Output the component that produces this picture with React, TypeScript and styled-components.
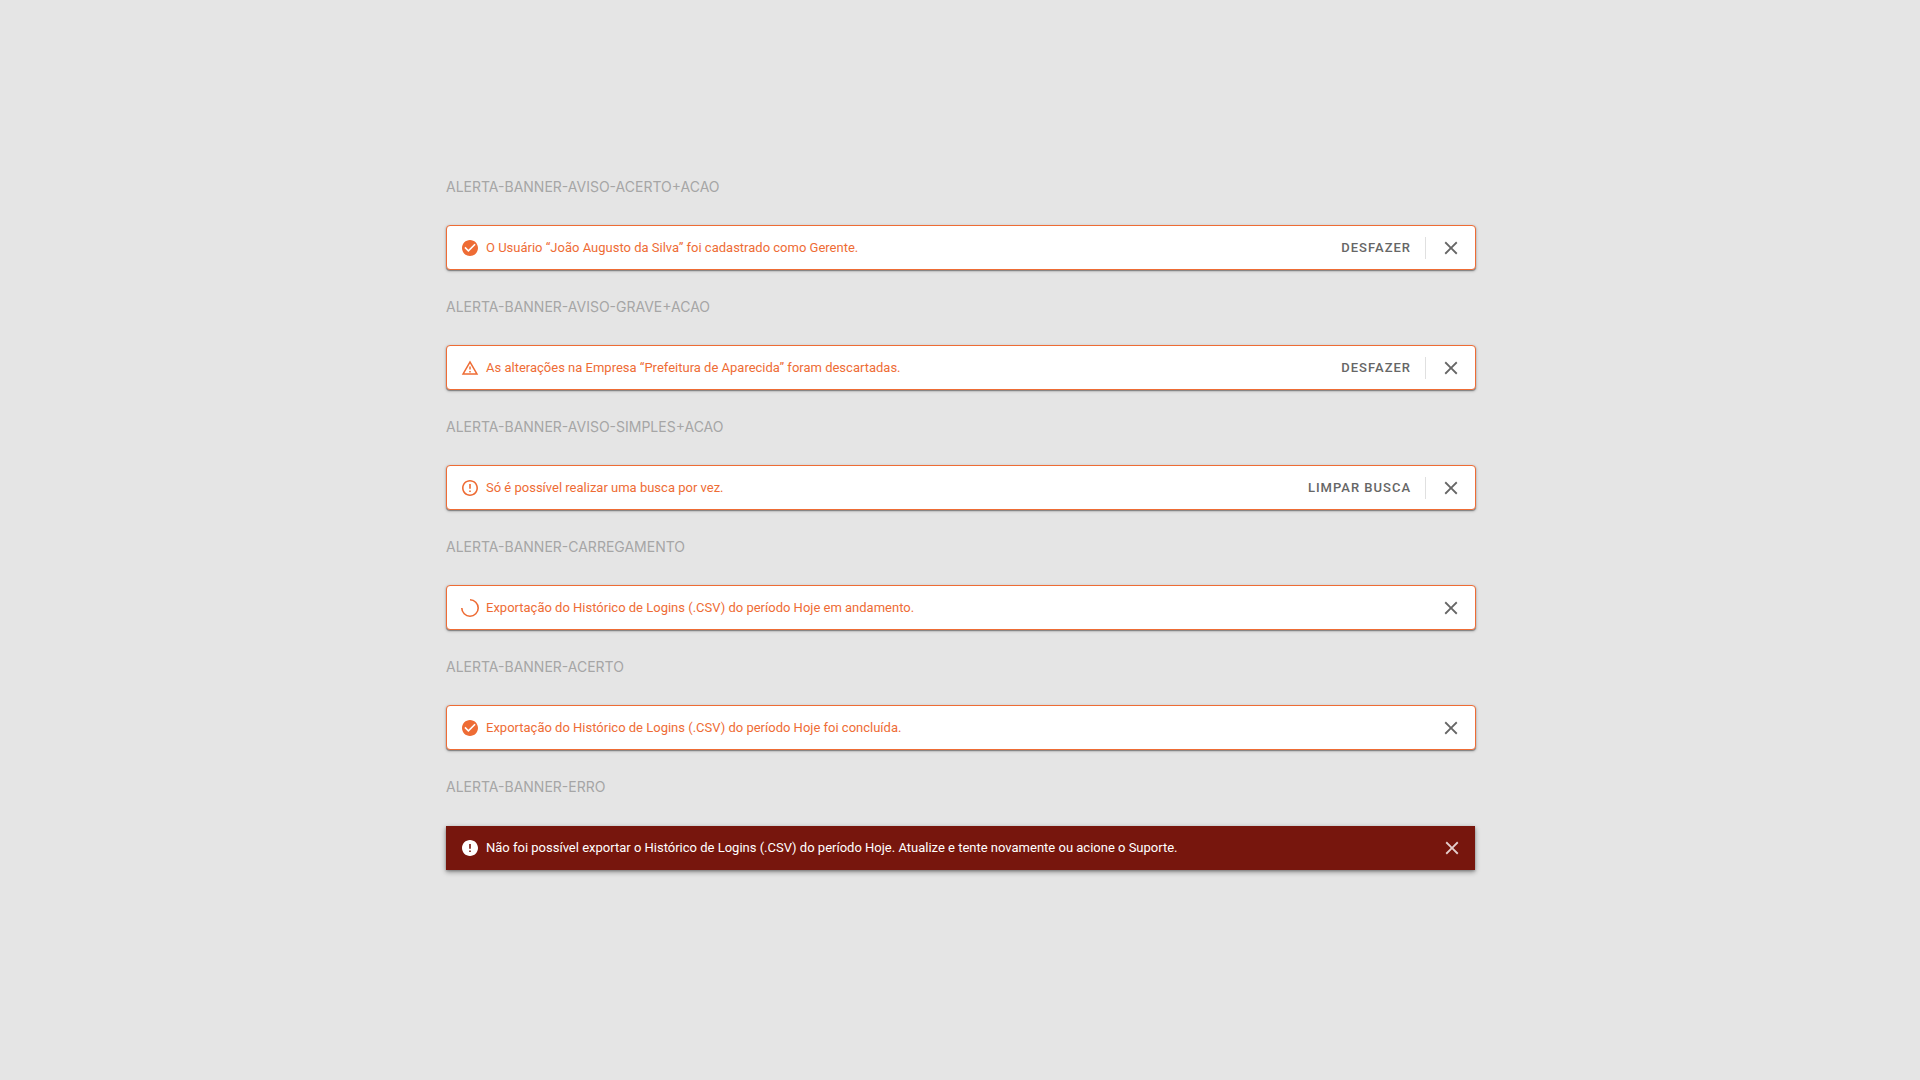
import React from "react";
import styled, { createGlobalStyle, css } from "styled-components";

const GlobalStyle = createGlobalStyle`
  *, *::before, *::after { box-sizing: border-box; }
  body {
    margin: 0;
    background: #e5e5e5;
    font-family: Roboto, "Liberation Sans", sans-serif;
  }
`;

const Page = styled.main`
  min-height: 100vh;
  display: flex;
  flex-direction: column;
  align-items: center;
  padding: 175px 24px 24px 26px;
`;

const Gallery = styled.div`
  width: 100%;
  max-width: 1030px;
  display: flex;
  flex-direction: column;
  gap: 25px;
`;

const Specimen = styled.section`
  display: flex;
  flex-direction: column;
  gap: 26px;
`;

const Name = styled.h2`
  margin: 0;
  font-family: Inter, "Liberation Sans", sans-serif;
  font-size: 14px;
  font-weight: 400;
  line-height: 24px;
  color: #a6a6a6;
`;

const Banner = styled.div<{ $error?: boolean }>`
  display: flex;
  align-items: center;
  min-height: 45px;
  padding: 0 13px 0 14px;
  border: 1px solid #ee6c35;
  border-radius: 4px;
  background: #fff;
  color: #ee6c35;
  box-shadow: 0 1px 3px rgba(0, 0, 0, 0.3), 0 1px 1px rgba(0, 0, 0, 0.3);
  ${({ $error }) =>
    $error &&
    css`
      min-height: 44px;
      margin: 1px 1px 0 0;
      padding: 0 12px 0 15px;
      border: 0;
      border-radius: 0;
      background: #77160d;
      color: #fff;
      box-shadow: 0 2px 5px rgba(0, 0, 0, 0.4), 0 1px 2px rgba(0, 0, 0, 0.2);
    `}
`;

const Icon = styled.svg`
  flex: none;
  width: 18px;
  height: 18px;
  fill: currentColor;
`;

const Message = styled.p`
  flex: 1;
  margin: 0 0 0 7px;
  font-size: 13px;
  line-height: 18px;
`;

const Action = styled.button`
  border: 0;
  background: none;
  padding: 0 14px 0 8px;
  color: #666;
  font: 500 13px/20px Roboto, "Liberation Sans", sans-serif;
  letter-spacing: 1px;
  text-transform: uppercase;
  cursor: pointer;
`;

const Divider = styled.span`
  width: 1px;
  height: 22px;
  margin-right: 14px;
  background: #e0e0e0;
`;

const Close = styled.button<{ $error?: boolean }>`
  display: flex;
  border: 0;
  padding: 0;
  background: none;
  color: ${({ $error }) => ($error ? "#e4cfcd" : "#666")};
  cursor: pointer;
`;

const CloseIcon = styled(Icon)`
  width: 22px;
  height: 22px;
`;

const icons = {
  success:
    "M12 2C6.48 2 2 6.48 2 12s4.48 10 10 10 10-4.48 10-10S17.52 2 12 2zm-2 15l-5-5 1.41-1.41L10 14.17l7.59-7.59L19 8l-9 9z",
  warning: "M12 5.99L19.53 19H4.47L12 5.99M12 2L1 21h22L12 2zm1 14h-2v2h2v-2zm0-6h-2v4h2v-4z",
  notice:
    "M11 15h2v2h-2zm0-8h2v6h-2zm.99-5C6.47 2 2 6.48 2 12s4.47 10 9.99 10C17.52 22 22 17.52 22 12S17.52 2 11.99 2zM12 20c-4.42 0-8-3.58-8-8s3.58-8 8-8 8 3.58 8 8-3.58 8-8 8z",
  error:
    "M12 2C6.48 2 2 6.48 2 12s4.48 10 10 10 10-4.48 10-10S17.52 2 12 2zm1 15h-2v-2h2v2zm0-4h-2V7h2v6z",
};

type Kind = keyof typeof icons | "loading";

function StatusIcon({ kind }: { kind: Kind }) {
  if (kind === "loading") {
    return (
      <Icon viewBox="0 0 18 18" aria-hidden="true">
        <path
          d="M9 .8A8.2 8.2 0 1 1 .8 9"
          fill="none"
          stroke="currentColor"
          strokeWidth="1.6"
        />
      </Icon>
    );
  }
  const viewBox = kind === "warning" ? "0 0 24 24" : "0.75 0.75 22.5 22.5";
  return (
    <Icon viewBox={viewBox} aria-hidden="true">
      <path d={icons[kind]} />
    </Icon>
  );
}

interface Alert {
  name: string;
  kind: Kind;
  message: string;
  action?: string;
}

const alerts: Alert[] = [
  {
    name: "ALERTA-BANNER-AVISO-ACERTO+ACAO",
    kind: "success",
    message: "O Usuário “João Augusto da Silva” foi cadastrado como Gerente.",
    action: "Desfazer",
  },
  {
    name: "ALERTA-BANNER-AVISO-GRAVE+ACAO",
    kind: "warning",
    message: "As alterações na Empresa “Prefeitura de Aparecida” foram descartadas.",
    action: "Desfazer",
  },
  {
    name: "ALERTA-BANNER-AVISO-SIMPLES+ACAO",
    kind: "notice",
    message: "Só é possível realizar uma busca por vez.",
    action: "Limpar busca",
  },
  {
    name: "ALERTA-BANNER-CARREGAMENTO",
    kind: "loading",
    message: "Exportação do Histórico de Logins (.CSV) do período Hoje em andamento.",
  },
  {
    name: "ALERTA-BANNER-ACERTO",
    kind: "success",
    message: "Exportação do Histórico de Logins (.CSV) do período Hoje foi concluída.",
  },
  {
    name: "ALERTA-BANNER-ERRO",
    kind: "error",
    message:
      "Não foi possível exportar o Histórico de Logins (.CSV) do período Hoje. Atualize e tente novamente ou acione o Suporte.",
  },
];

export default function App() {
  return (
    <>
      <GlobalStyle />
      <Page>
        <Gallery>
          {alerts.map(({ name, kind, message, action }) => {
            const isError = kind === "error";
            return (
              <Specimen key={name}>
                <Name>{name}</Name>
                <Banner $error={isError} role={isError ? "alert" : "status"}>
                  <StatusIcon kind={kind} />
                  <Message>{message}</Message>
                  {action && (
                    <>
                      <Action type="button">{action}</Action>
                      <Divider />
                    </>
                  )}
                  <Close type="button" aria-label="Fechar" $error={isError}>
                    <CloseIcon viewBox="0 0 24 24" aria-hidden="true">
                      <path d="M19 6.41L17.59 5 12 10.59 6.41 5 5 6.41 10.59 12 5 17.59 6.41 19 12 13.41 17.59 19 19 17.59 13.41 12z" />
                    </CloseIcon>
                  </Close>
                </Banner>
              </Specimen>
            );
          })}
        </Gallery>
      </Page>
    </>
  );
}
